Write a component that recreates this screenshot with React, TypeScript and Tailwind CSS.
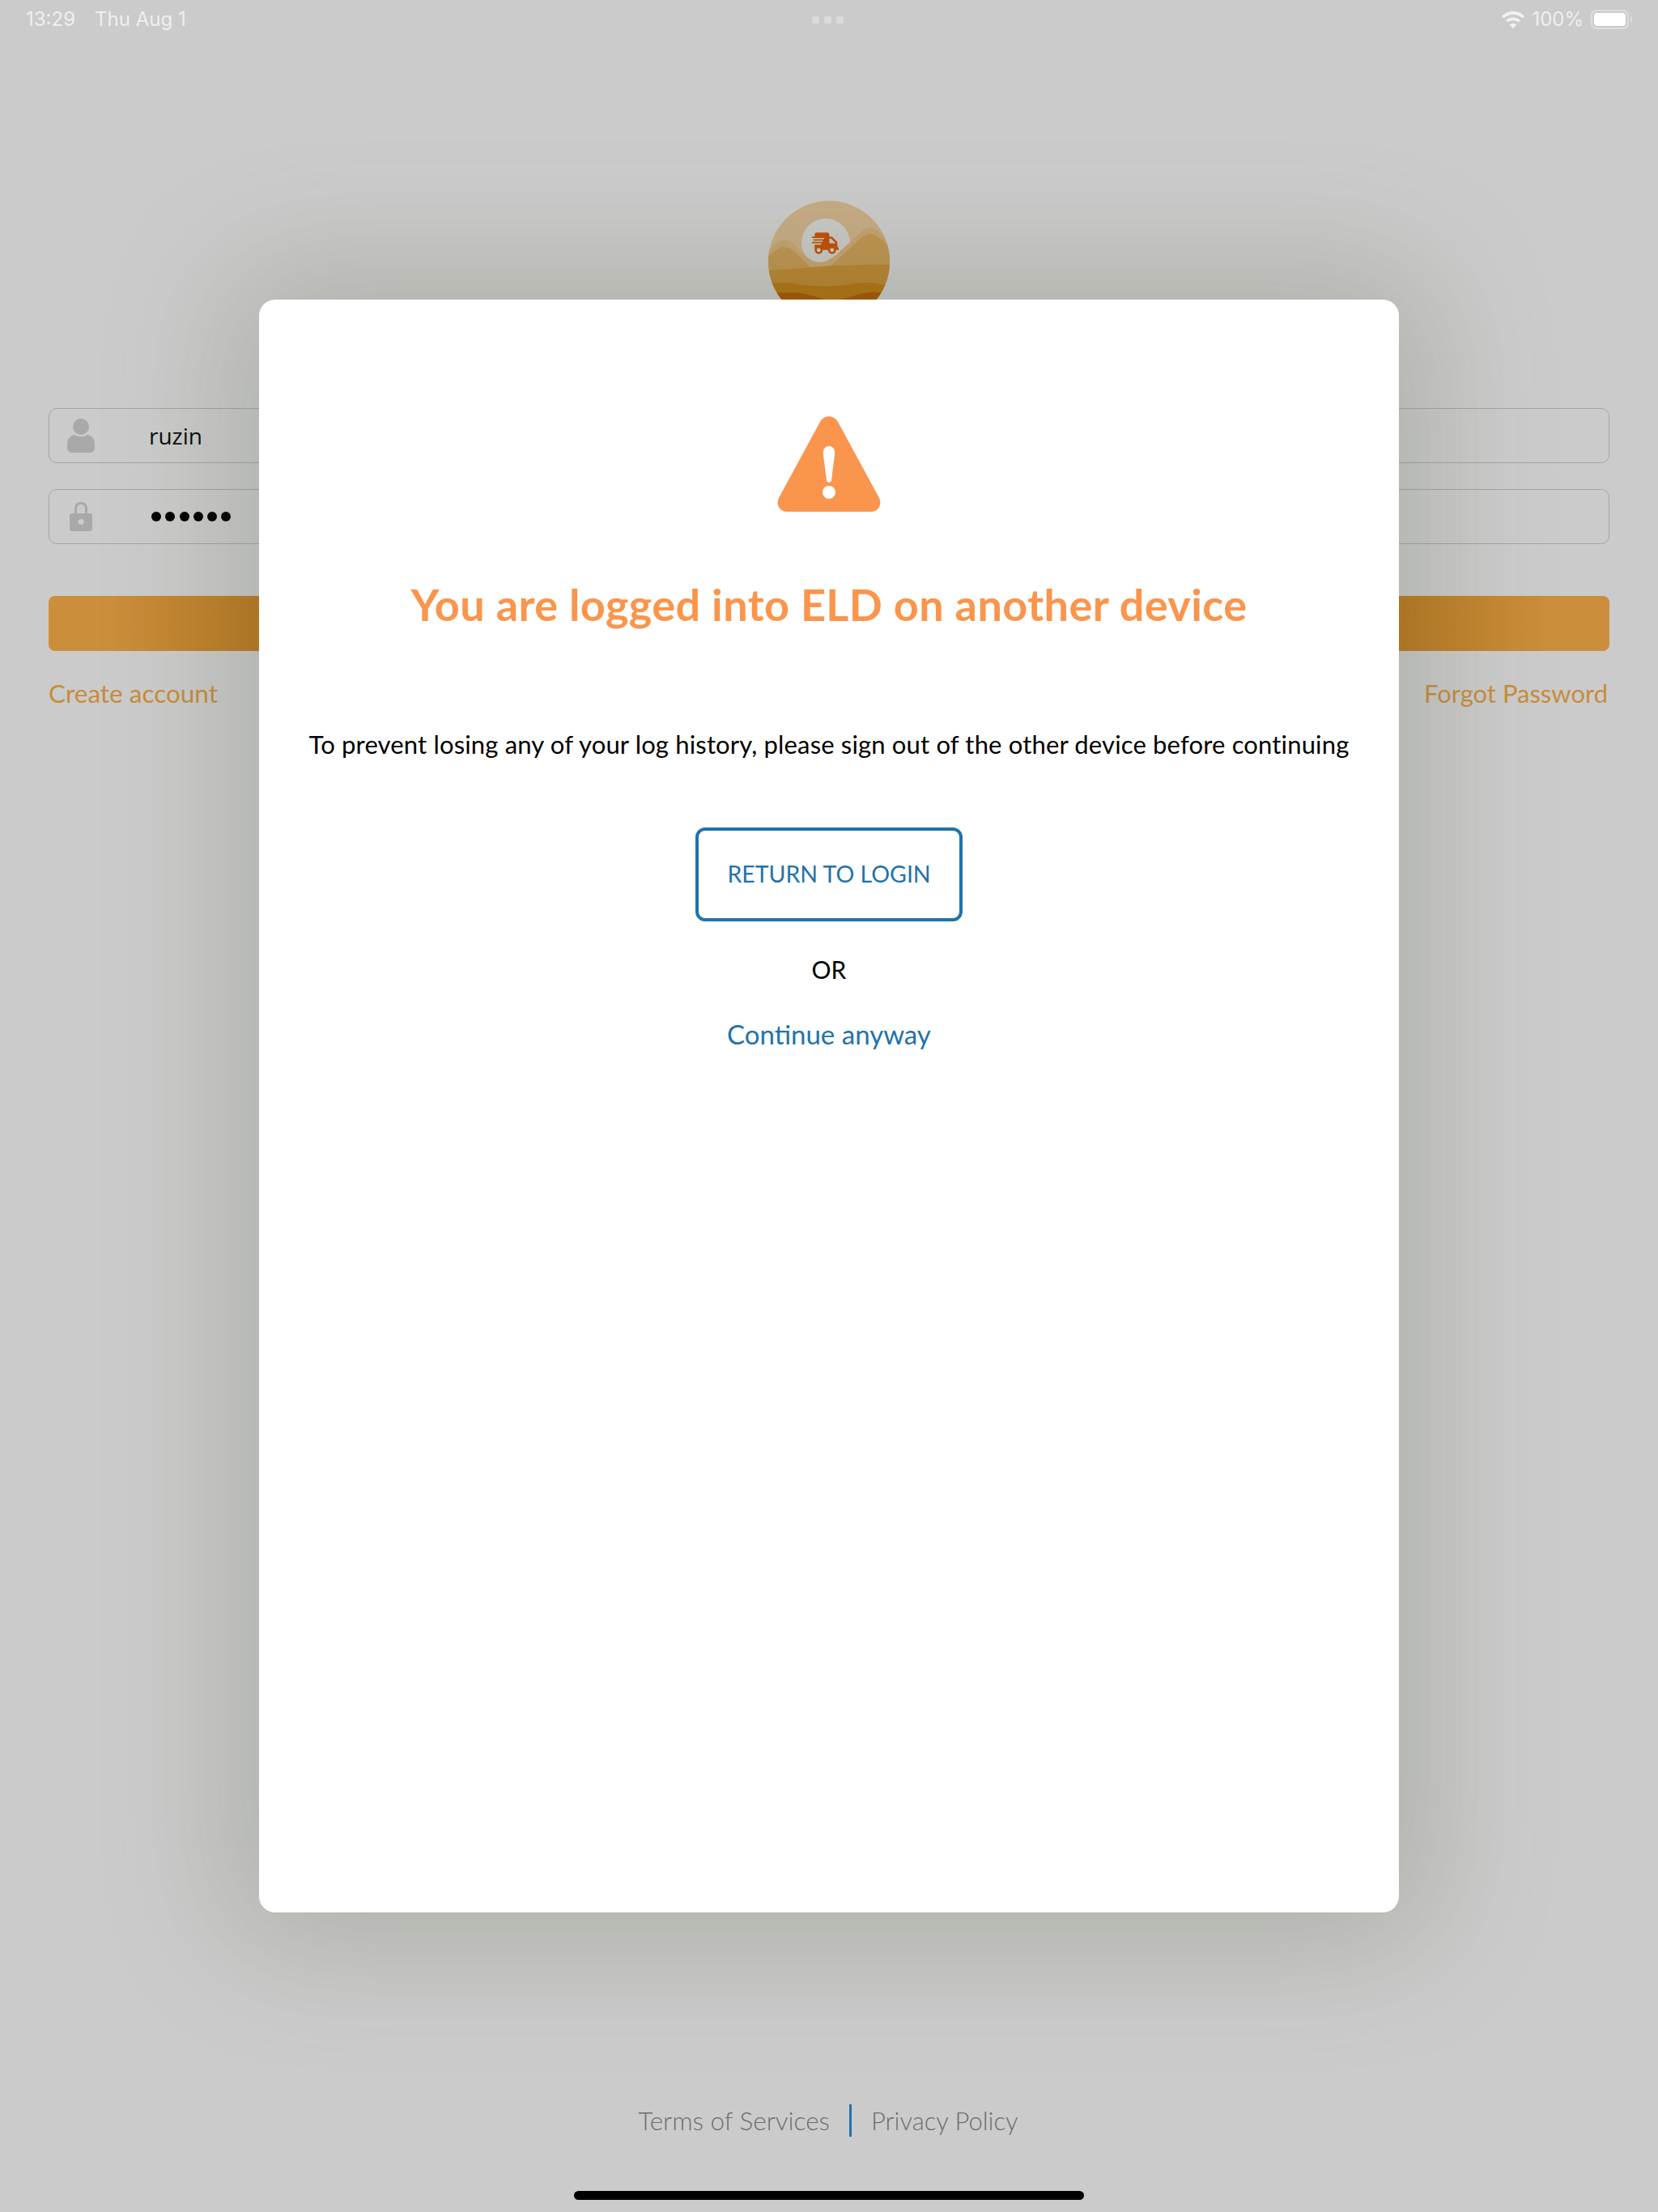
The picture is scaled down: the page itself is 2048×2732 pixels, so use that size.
import { FaShippingFast } from "react-icons/fa";

const sans = "font-['Lato','Open_Sans',sans-serif]";

function Logo() {
  return (
    <svg width="150" height="150" viewBox="0 0 150 150" className="block">
      <defs>
        <clipPath id="disc">
          <circle cx="75" cy="75" r="75" />
        </clipPath>
      </defs>
      <g clipPath="url(#disc)">
        <rect width="150" height="150" fill="#c6ac85" />
        <circle cx="71" cy="52" r="30" fill="#c9c9c7" />
        <path d="M0 62 C8 54 14 48 20 48 C28 48 34 56 42 64 C50 72 56 76 63 76 C78 76 88 62 100 52 C110 43 118 33 125 33 C132 33 138 40 150 52 L150 150 L0 150 Z" fill="#c6a270" />
        <path d="M0 68 C8 62 14 57 20 57 C28 57 36 66 44 74 C48 78 50 80 52 82 L78 80 C88 70 100 60 110 50 C116 45 120 41 125 41 C134 41 140 48 150 58 L150 150 L0 150 Z" fill="#bf944f" />
        <path d="M0 86 C30 84 50 82 84 80 C100 80 118 78 150 79 L150 150 L0 150 Z" fill="#b9842f" />
        <path d="M0 103 C10 101 20 100 30 102 C50 106 70 106 84 105 C100 104 110 101 124 101 C135 102 145 104 150 106 L150 150 L0 150 Z" fill="#b2720c" />
        <path d="M0 116 C15 113 35 112 50 116 C65 120 75 124 84 123 C100 120 115 113 130 113 L150 114 L150 150 L0 150 Z" fill="#a85200" />
        <FaShippingFast x="54" y="36" size="33" color="#c34d03" />
      </g>
    </svg>
  );
}

function UserIcon() {
  return (
    <svg width="36" height="42" viewBox="0 0 36 42" fill="#a9a9a9">
      <circle cx="18" cy="10" r="10" />
      <path d="M10 20 C13 23 23 23 26 20 C31 21 35 25 35 31 L35 36 C35 39 33 42 29 42 L7 42 C3 42 1 39 1 36 L1 31 C1 25 5 21 10 20 Z" />
    </svg>
  );
}

function LockIcon() {
  return (
    <svg width="28" height="36" viewBox="0 0 28 36" fill="#a9a9a9">
      <path fillRule="evenodd" d="M6 14 L6 9 C6 3 9 0 14 0 C19 0 22 3 22 9 L22 14 L25 14 C27 14 28 15 28 17 L28 33 C28 35 27 36 25 36 L3 36 C1 36 0 35 0 33 L0 17 C0 15 1 14 3 14 Z M9 14 L19 14 L19 9 C19 5 17 3 14 3 C11 3 9 5 9 9 Z M14 21 A3.5 3.5 0 1 0 14 28 A3.5 3.5 0 1 0 14 21 Z" />
    </svg>
  );
}

function WarningIcon() {
  return (
    <svg width="128" height="118" viewBox="0 0 128 118">
      <path d="M53 7 C58 -2 70 -2 75 7 L126 101 C130 109 125 118 116 118 L12 118 C3 118 -2 109 2 101 Z" fill="#fa954d" />
      <path d="M57 48 C56 41 59 37 64 37 C69 37 72 41 71 48 L67 79 C66.500 83 61.500 83 61 79 Z" fill="#ffffff" />
      <circle cx="64" cy="94" r="8" fill="#ffffff" />
    </svg>
  );
}

function StatusBar() {
  return (
    <div className="relative flex h-12 items-center justify-between pl-8 pr-[32px] font-['Inter',sans-serif] text-[24px] text-[#efefef]">
      <div className="flex gap-[24px]">
        <span>13:29</span>
        <span>Thu Aug 1</span>
      </div>
      <div className="absolute left-[1003px] top-[20px] flex gap-[6px]">
        <span className="h-[9px] w-[9px] rounded-[2px] bg-[#dadada]" />
        <span className="h-[9px] w-[9px] rounded-[2px] bg-[#dadada]" />
        <span className="h-[9px] w-[9px] rounded-[2px] bg-[#dadada]" />
      </div>
      <div className="flex items-center gap-[9px]">
        <svg width="28" height="21" viewBox="0 0 28 21" fill="#f2f2f2">
          <path d="M14 0 C20 0 24 2 28 6 L25.500 8.500 C22 5.500 18.500 4 14 4 C9.500 4 6 5.500 2.500 8.500 L0 6 C4 2 8 0 14 0 Z" />
          <path d="M14 7.500 C17.500 7.500 20.500 8.700 23 11 L20.500 13.500 C18.500 12 16.500 11.200 14 11.200 C11.500 11.200 9.500 12 7.500 13.500 L5 11 C7.500 8.700 10.500 7.500 14 7.500 Z" />
          <path d="M14 15 C15.700 15 17 15.500 18.200 16.500 L14 21 L9.800 16.500 C11 15.500 12.300 15 14 15 Z" />
        </svg>
        <span>100%</span>
        <div className="flex items-center gap-[2px]">
          <div className="flex h-[24px] w-[47px] items-center rounded-[7px] border-2 border-[#dedede] p-[2px]">
            <div className="h-full w-full rounded-[4px] bg-white" />
          </div>
          <div className="h-[8px] w-[2px] rounded-r-full bg-[#dedede]" />
        </div>
      </div>
    </div>
  );
}

function Field({ icon, children }: { icon: React.ReactNode; children: React.ReactNode }) {
  return (
    <div className="flex h-[68px] items-center rounded-[10px] border border-[#a4a5a3]">
      <div className="flex w-[80px] justify-center pr-[3px]">{icon}</div>
      <div className="pl-[43px] font-['Open_Sans',sans-serif] text-[28px] text-[#0a0a0a]">{children}</div>
    </div>
  );
}

export default function App() {
  return (
    <div className={`relative flex h-[2732px] w-full flex-col overflow-hidden bg-[#cbcbcb] ${sans}`}>
      <StatusBar />

      <div className="mt-[200px] flex justify-center">
        <Logo />
      </div>

      <div className="mt-[106px] flex flex-col px-[60px]">
        <Field icon={<UserIcon />}>ruzin</Field>
        <div className="mt-[32px]">
          <Field icon={<LockIcon />}>
            <div className="flex gap-[5.300px] pl-[3px]">
              {[0, 1, 2, 3, 4, 5].map((i) => (
                <span key={i} className="h-[12px] w-[12px] rounded-full bg-black" />
              ))}
            </div>
          </Field>
        </div>
        <div className="mt-[64px] h-[68px] rounded-[8px] bg-[linear-gradient(90deg,#cb8f3c_4%,#bc791f_13.5%,#bc791f_86.5%,#cb8f3c_96%)]" />
        <div className="mt-[29px] flex items-center justify-between pr-[2px] text-[31.500px] text-[#c98c3b]">
          <span>Create account</span>
          <span className="text-[31px]">Forgot Password</span>
        </div>
      </div>

      <div className="mt-auto flex items-center justify-center gap-[24px] pb-[89px] pr-[2px] text-[31.500px] font-light text-[#6e6e6e]">
        <span>Terms of Services</span>
        <span className="h-[40px] w-[3px] bg-[#2272ab]" />
        <span className="text-[31px]">Privacy Policy</span>
      </div>

      <div className="absolute bottom-[15px] left-[709px] h-[11px] w-[630px] rounded-full bg-black" />

      {/* modal sits over the login form */}
      <div className="absolute left-[320px] top-[370px] flex h-[1992px] w-[1408px] flex-col items-center rounded-[20px] bg-white pt-[144px] shadow-[0_0_160px_30px_rgba(90,100,70,0.27)]">
        <WarningIcon />
        <h1 className="mt-[76px] text-[54px] leading-[78px] font-bold tracking-[0.4px] text-[#fa954d]">You are logged into ELD on another device</h1>
        <p className="mt-[113px] text-[31px] leading-[40px] tracking-[0.16px] text-black">
          To prevent losing any of your log history, please sign out of the other device before continuing
        </p>
        <button className="mt-[83px] flex h-[116px] w-[330px] items-center justify-center rounded-[12px] border-4 border-[#2272ab] pb-[2px] text-[28.500px] text-[#2272ab]">
          RETURN TO LOGIN
        </button>
        <div className="mt-[39px] text-[30px] leading-[40px] text-black">OR</div>
        <div className="mt-[40px] text-[33px] leading-[40px] text-[#2272ab]">Continue anyway</div>
      </div>
    </div>
  );
}
